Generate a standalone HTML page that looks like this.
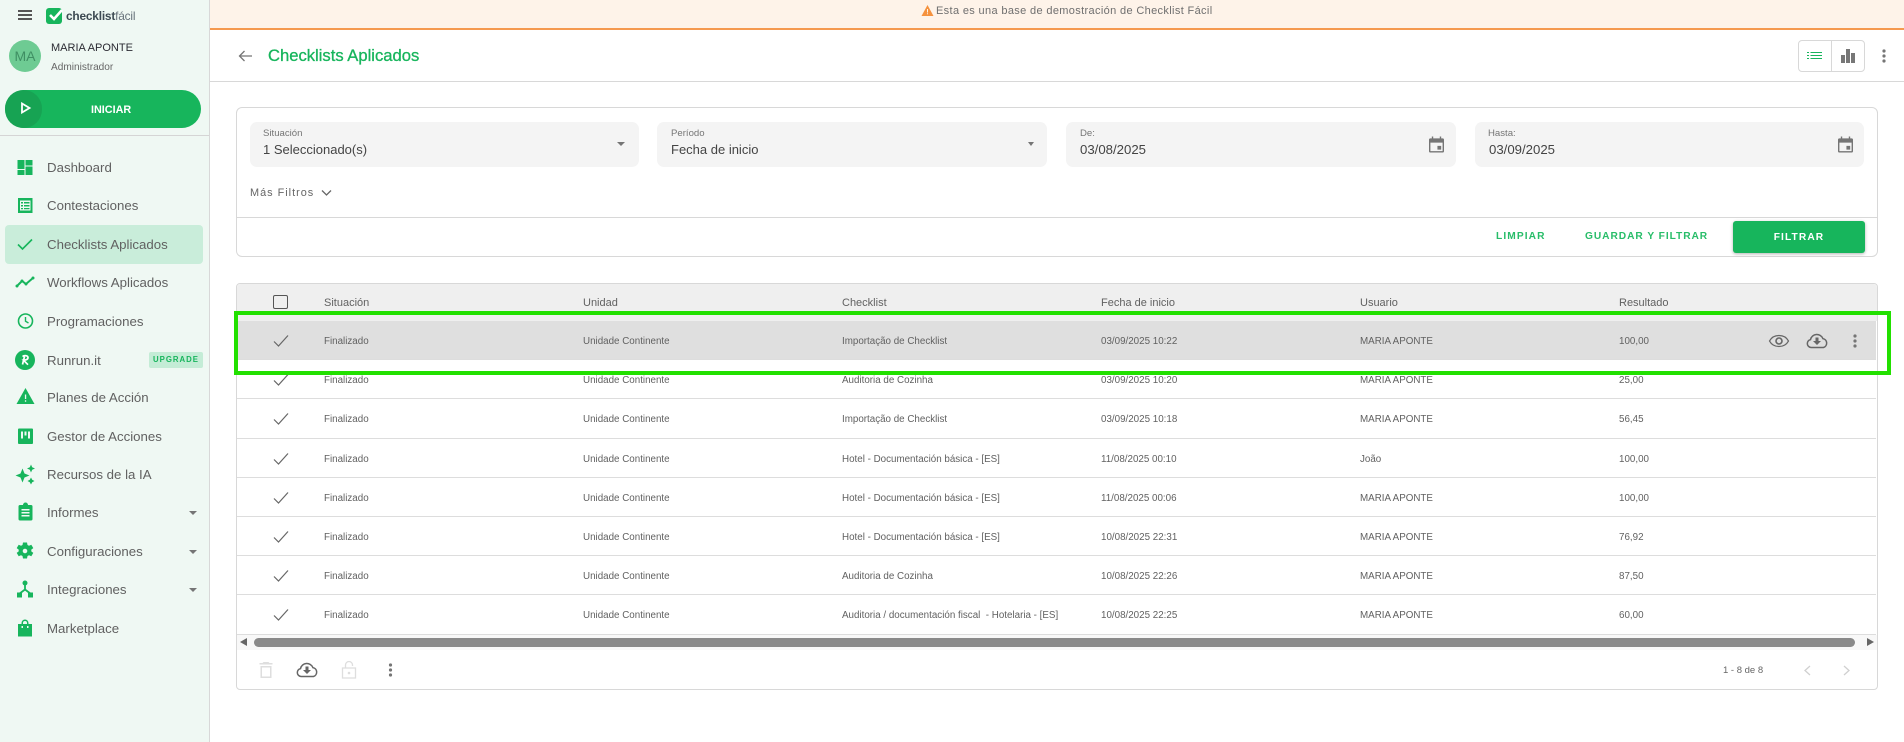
<!DOCTYPE html>
<html lang="es"><head><meta charset="utf-8"><title>Checklists Aplicados</title>
<style>
*{box-sizing:border-box;margin:0;padding:0}
html,body{width:1904px;height:742px;overflow:hidden;background:#fff;font-family:"Liberation Sans",sans-serif;color:#555}
.a{position:absolute}
.t{position:absolute;white-space:nowrap;line-height:16px}
#side{position:absolute;left:0;top:0;width:210px;height:742px;background:#eff8f3;border-right:1px solid #d8d8d8}
.m{position:absolute;left:47px;font-size:13.25px;line-height:18px;color:#616161;white-space:nowrap;margin-top:1px}
.ic{position:absolute;left:13px;width:24px;height:24px;fill:#17b55c}
.car{position:absolute;left:189px;width:0;height:0;border-left:4px solid transparent;border-right:4px solid transparent;border-top:4px solid #757575}
.f{position:absolute;top:122px;height:45px;background:#f4f4f4;border-radius:7px}
.f small{position:absolute;left:13px;top:6px;font-size:9.6px;line-height:12px;color:#757575}
.f b{position:absolute;left:13px;top:19px;font-weight:400;font-size:13px;line-height:18px;color:#444;white-space:nowrap}
.row{position:absolute;left:237px;width:1639px;height:39.2px;border-bottom:1px solid #ddd}
.row span{position:absolute;top:14px;font-size:9.8px;line-height:14px;color:#616161;white-space:nowrap}
.row svg{position:absolute;left:32px;top:8px;width:24px;height:24px;fill:#666}
.c1{left:87px}.c2{left:346px}.c3{left:605px}.c4{left:864px}.c5{left:1123px}.c6{left:1382px}
.h{position:absolute;top:296px;font-size:11px;line-height:14px;color:#616161;white-space:nowrap}
.g{fill:#757575}
</style></head><body>

<div id="side">
  <div class="a" style="left:18px;top:10px;width:14px;height:2px;background:#555"></div>
  <div class="a" style="left:18px;top:14px;width:14px;height:2px;background:#555"></div>
  <div class="a" style="left:18px;top:18px;width:14px;height:2px;background:#555"></div>
  <div class="a" style="left:46px;top:8px;width:16px;height:16px;background:#17b55c;border-radius:3px"></div>
  <svg class="a" style="left:46px;top:6px" width="18" height="18" viewBox="0 0 18 18"><path d="M4 9l4 4 8-9" fill="none" stroke="#fff" stroke-width="2.6"/></svg>
  <div class="t" style="left:66px;top:8px;font-size:11.9px;font-weight:700;color:#3d4a52;letter-spacing:-.2px">checklist<span style="font-weight:400;color:#66717a">fácil</span></div>

  <div class="a" style="left:9px;top:40px;width:32px;height:32px;border-radius:50%;background:#6ecb93;color:#3f8f63;font-size:14px;line-height:32px;text-align:center">MA</div>
  <div class="t" style="left:51px;top:40px;font-size:11px;color:#2b2b33">MARIA APONTE</div>
  <div class="t" style="left:51px;top:60px;font-size:10.1px;color:#666">Administrador</div>

  <div class="a" style="left:5px;top:90px;width:196px;height:38px;border-radius:19px;background:#17b55c"></div>
  <div class="a" style="left:5px;top:90px;width:37px;height:38px;border-radius:19px;background:#17a353"></div>
  <svg class="a" style="left:20px;top:102px" width="12" height="12" viewBox="0 0 12 12"><path d="M2 1.5v9l7.5-4.500z" fill="none" stroke="#fff" stroke-width="1.8"/></svg>
  <div class="t" style="left:91px;top:102px;font-size:10.8px;font-weight:700;color:#fff">INICIAR</div>

  <div class="a" style="left:0;top:135px;width:209px;height:1px;background:#d5d5d5"></div>
  <div class="a" style="left:5px;top:225px;width:198px;height:39px;background:#c9edda;border-radius:4px"></div>

  <svg class="ic" style="top:155px" viewBox="0 0 24 24"><path d="M4.5 5h7v9h-7zM12.500 5h7v5.500h-7zM12.500 11.500h7v8.500h-7zM4.500 15h7v5h-7z"/></svg>
  <div class="m" style="top:158px">Dashboard</div>
  <svg class="ic" style="top:193px" viewBox="0 0 24 24"><path fill-rule="evenodd" d="M5 5h14.500v15H5zM7 7.500v10h10.500v-10z"/><path d="M8 9h2v1.500H8zM11 9h5.500v1.500H11zM8 12h2v1.500H8zM11 12h5.500v1.500H11zM8 15h2v1.300H8zM11 15h5.500v1.300H11z"/></svg>
  <div class="m" style="top:196px">Contestaciones</div>
  <svg class="ic" style="top:232px" viewBox="0 0 24 24"><path d="M5 12.500l4.500 4.500L19 7.500" fill="none" stroke="#17b55c" stroke-width="1.6"/></svg>
  <div class="m" style="top:235px">Checklists Aplicados</div>
  <svg class="ic" style="top:270px" viewBox="0 0 24 24"><path d="M4 16l5-5 4 3 7-6" fill="none" stroke="#17b55c" stroke-width="2"/><circle cx="4" cy="16" r="1.5"/><circle cx="9" cy="11" r="1.5"/><circle cx="13" cy="14" r="1.5"/><circle cx="20" cy="8" r="1.5"/></svg>
  <div class="m" style="top:273px">Workflows Aplicados</div>
  <svg class="ic" style="top:309px" viewBox="0 0 24 24"><circle cx="12.5" cy="12" r="7" fill="none" stroke="#17b55c" stroke-width="1.6"/><path d="M12.500 8v4.200l3 1.800" fill="none" stroke="#17b55c" stroke-width="1.4"/></svg>
  <div class="m" style="top:312px">Programaciones</div>
  <svg class="ic" style="top:348px" viewBox="0 0 24 24"><circle cx="12" cy="12" r="10"/><path d="M9.500 8.500c2-1.500 5.500-1 5.500 1.200 0 2-3 2.500-4.500 2.500l4.500 4.500M11.500 8.500l-2 8" fill="none" stroke="#fff" stroke-width="1.7"/></svg>
  <div class="m" style="top:351px">Runrun.it</div>
  <div class="a" style="left:149px;top:352px;width:54px;height:16px;background:#c4ecd6;border-radius:2px;color:#17b55c;font-size:7.8px;line-height:16px;text-align:center;letter-spacing:1px;font-weight:700">UPGRADE</div>
  <svg class="ic" style="top:385px" viewBox="0 0 24 24"><path fill-rule="evenodd" d="M12.500 3l9 16h-18zM11.900 9.500v4.500h1.300V9.500zM11.900 15.300v1.500h1.300v-1.500z"/></svg>
  <div class="m" style="top:388px">Planes de Acción</div>
  <svg class="ic" style="top:424px" viewBox="0 0 24 24"><path fill-rule="evenodd" d="M6 4.500h13a1 1 0 011 1V19a1 1 0 01-1 1H6a1 1 0 01-1-1V5.500a1 1 0 011-1zM8 7.500v7h2v-7zM11.500 7.500v4h2v-4zM15 7.500v7h2v-7z"/></svg>
  <div class="m" style="top:427px">Gestor de Acciones</div>
  <svg class="ic" style="top:462px" viewBox="0 0 24 24"><path d="M9.500 6.500l2 5 5 2-5 2-2 5-2-5-5-2 5-2zM18 2.500l1.200 2.800 2.800 1.200-2.800 1.200L18 10.500l-1.200-2.800L14 6.500l2.800-1.200zM18 15.500l1.200 2.300 2.300 1.200-2.300 1.200L18 22.500l-1.200-2.300-2.300-1.200 2.300-1.200z"/></svg>
  <div class="m" style="top:465px">Recursos de la IA</div>
  <svg class="ic" style="top:500px" viewBox="0 0 24 24"><path fill-rule="evenodd" d="M7 5h3a2.500 2.500 0 015 0h3a1.500 1.500 0 011.500 1.500V19a1.500 1.500 0 01-1.500 1.500H7A1.500 1.500 0 015.500 19V6.500A1.500 1.500 0 017 5zM8.500 9v1.500h8V9zM8.500 12v1.500h8V12zM8.500 15v1.500h8V15z"/></svg>
  <div class="m" style="top:503px">Informes</div>
  <div class="car" style="top:511px"></div>
  <svg class="ic" style="top:539px" viewBox="0 0 24 24"><path fill-rule="evenodd" d="M10 3.500h4l.5 2.500 1.500.7 2.300-1 2 3.400-2 1.500v1.800l2 1.500-2 3.400-2.300-1-1.500.7-.5 2.500h-4l-.5-2.500-1.500-.7-2.300 1-2-3.400 2-1.500v-1.800l-2-1.500 2-3.400 2.300 1 1.500-.7zM12 9.700a2.300 2.300 0 100 4.600 2.300 2.300 0 000-4.600z"/></svg>
  <div class="m" style="top:542px">Configuraciones</div>
  <div class="car" style="top:550px"></div>
  <svg class="ic" style="top:577px" viewBox="0 0 24 24"><path d="M12 7v5.500l-6 4.500M12 12.500l6 4.500" fill="none" stroke="#17b55c" stroke-width="1.8"/><circle cx="12" cy="6" r="2.5"/><rect x="4" y="15.500" width="5" height="5"/><rect x="15" y="15.500" width="5" height="5"/></svg>
  <div class="m" style="top:580px">Integraciones</div>
  <div class="car" style="top:588px"></div>
  <svg class="ic" style="top:616px" viewBox="0 0 24 24"><path fill-rule="evenodd" d="M5 8h3.500V7a3.500 3.500 0 017 0v1H19v12.500H5zM10 8h4V7a2 2 0 00-4 0zM8.500 10v2H10v-2zM14 10v2h1.500v-2z"/></svg>
  <div class="m" style="top:619px">Marketplace</div>
</div>

<div class="a" style="left:210px;top:0;width:1694px;height:30px;background:#fef3e9;border-bottom:2px solid #f5994f"></div>
<svg class="a" style="left:920.5px;top:4px" width="13" height="13" viewBox="0 0 13 13"><path fill-rule="evenodd" d="M6.500 1l6 11H.5zM6 5v3.500h1V5zM6 9.300v1h1v-1z" fill="#f5923e"/></svg>
<div class="t" style="left:936px;top:3px;font-size:11px;color:#6f6f6f;letter-spacing:.35px">Esta es una base de demostración de Checklist Fácil</div>

<svg class="a" style="left:236px;top:47px" width="18" height="18" viewBox="0 0 18 18"><path d="M16 9H3.500M8.500 4L3.500 9l5 5" fill="none" stroke="#757575" stroke-width="1.3"/></svg>
<div class="t" style="left:268px;top:47px;font-size:16.6px;line-height:18px;font-weight:400;color:#17b55c;-webkit-text-stroke:.3px #17b55c">Checklists Aplicados</div>
<div class="a" style="left:210px;top:81px;width:1694px;height:1px;background:#d8d8d8"></div>

<div class="a" style="left:1798px;top:40px;width:67px;height:32px;border:1px solid #d8d8d8;border-radius:4px"></div>
<div class="a" style="left:1831px;top:40px;width:1px;height:32px;background:#d8d8d8"></div>
<svg class="a" style="left:1807px;top:52px" width="15" height="7" viewBox="0 0 15 7"><path d="M0 .5h2M3.500 .5h11.500M0 3.500h2M3.500 3.500h11.500M0 6.500h2M3.500 6.500h11.500" stroke="#17b55c" stroke-width="1"/></svg>
<svg class="a" style="left:1841px;top:49px" width="14" height="14" viewBox="0 0 14 14"><path d="M0 6h4v8H0zM5 0h4v14H5zM10 4h4v10h-4z" fill="#777"/></svg>
<svg class="a" style="left:1882px;top:49px" width="4" height="14" viewBox="0 0 4 14"><circle cx="2" cy="2" r="1.6" class="g"/><circle cx="2" cy="7" r="1.6" class="g"/><circle cx="2" cy="12" r="1.6" class="g"/></svg>

<div class="a" style="left:236px;top:107px;width:1642px;height:150px;border:1px solid #d8d8d8;border-radius:6px"></div>
<div class="f" style="left:250px;width:389px"><small>Situación</small><b>1 Seleccionado(s)</b></div>
<div class="a" style="left:617px;top:142px;width:0;height:0;border-left:4px solid transparent;border-right:4px solid transparent;border-top:4px solid #757575"></div>
<div class="f" style="left:657px;width:390px"><small style="left:14px">Período</small><b style="left:14px">Fecha de inicio</b></div>
<div class="a" style="left:1028px;top:142px;width:0;height:0;border-left:3.5px solid transparent;border-right:3.5px solid transparent;border-top:4px solid #757575"></div>
<div class="f" style="left:1066px;width:390px"><small style="left:14px">De:</small><b style="left:14px;font-size:13.2px">03/08/2025</b></div>
<div class="f" style="left:1475px;width:389px"><small>Hasta:</small><b style="left:14px;font-size:13.2px">03/09/2025</b></div>
<svg class="a" style="left:1429px;top:136px" width="15" height="17" viewBox="0 0 16 17"><path fill-rule="evenodd" d="M3 0h1.500v2h7V0H13v2h1.500A1.500 1.500 0 0116 3.500v12a1.500 1.500 0 01-1.500 1.500h-13A1.500 1.500 0 010 15.500v-12A1.500 1.500 0 011.500 2H3zM1.500 6.500v9h13v-9zM9 10h4v4H9z" fill="#757575"/></svg>
<svg class="a" style="left:1838px;top:136px" width="15" height="17" viewBox="0 0 16 17"><path fill-rule="evenodd" d="M3 0h1.500v2h7V0H13v2h1.500A1.500 1.500 0 0116 3.500v12a1.500 1.500 0 01-1.500 1.500h-13A1.500 1.500 0 010 15.500v-12A1.500 1.500 0 011.500 2H3zM1.500 6.500v9h13v-9zM9 10h4v4H9z" fill="#757575"/></svg>
<div class="t" style="left:250px;top:185px;font-size:10.9px;color:#666;letter-spacing:1px">Más Filtros</div>
<svg class="a" style="left:321px;top:189px" width="11" height="8" viewBox="0 0 11 8"><path d="M1 1.500l4.500 4.500L10 1.500" fill="none" stroke="#666" stroke-width="1.3"/></svg>
<div class="a" style="left:237px;top:217px;width:1640px;height:1px;background:#d8d8d8"></div>
<div class="t" style="left:1496px;top:229px;font-size:10.2px;font-weight:700;color:#28bd69;letter-spacing:1.1px">LIMPIAR</div>
<div class="t" style="left:1585px;top:229px;font-size:10.2px;font-weight:700;color:#28bd69;letter-spacing:.95px">GUARDAR Y FILTRAR</div>
<div class="a" style="left:1733px;top:221px;width:132px;height:32px;background:#17b55c;border-radius:3px;box-shadow:0 1px 3px rgba(0,0,0,.3);color:#fff;font-size:10.2px;font-weight:700;line-height:34px;text-align:center;letter-spacing:1.1px">FILTRAR</div>

<div class="a" style="left:236px;top:283px;width:1642px;height:407px;border:1px solid #d8d8d8;border-radius:4px"></div>
<div class="a" style="left:237px;top:284px;width:1640px;height:37px;background:#efefef;border-radius:4px 4px 0 0"></div>
<div class="a" style="left:273px;top:295px;width:15px;height:14px;border:1px solid #555;border-radius:2px"></div>
<div class="h" style="left:324px">Situación</div>
<div class="h" style="left:583px">Unidad</div>
<div class="h" style="left:842px">Checklist</div>
<div class="h" style="left:1101px">Fecha de inicio</div>
<div class="h" style="left:1360px">Usuario</div>
<div class="h" style="left:1619px">Resultado</div>

<div class="row" style="top:321px;background:#dfdfdf"><svg viewBox="0 0 24 24"><path d="M5 12.500l4.500 4.500L19 6.500" fill="none" stroke="#666" stroke-width="1.2"/></svg><span class="c1">Finalizado</span><span class="c2">Unidade Continente</span><span class="c3">Importação de Checklist</span><span class="c4">03/09/2025 10:22</span><span class="c5">MARIA APONTE</span><span class="c6">100,00</span></div>
<div class="row" style="top:360.2px"><svg viewBox="0 0 24 24"><path d="M5 12.500l4.500 4.500L19 6.500" fill="none" stroke="#666" stroke-width="1.2"/></svg><span class="c1">Finalizado</span><span class="c2">Unidade Continente</span><span class="c3">Auditoria de Cozinha</span><span class="c4">03/09/2025 10:20</span><span class="c5">MARIA APONTE</span><span class="c6">25,00</span></div>
<div class="row" style="top:399.4px"><svg viewBox="0 0 24 24"><path d="M5 12.500l4.500 4.500L19 6.500" fill="none" stroke="#666" stroke-width="1.2"/></svg><span class="c1">Finalizado</span><span class="c2">Unidade Continente</span><span class="c3">Importação de Checklist</span><span class="c4">03/09/2025 10:18</span><span class="c5">MARIA APONTE</span><span class="c6">56,45</span></div>
<div class="row" style="top:438.6px"><svg viewBox="0 0 24 24"><path d="M5 12.500l4.500 4.500L19 6.500" fill="none" stroke="#666" stroke-width="1.2"/></svg><span class="c1">Finalizado</span><span class="c2">Unidade Continente</span><span class="c3">Hotel - Documentación básica - [ES]</span><span class="c4">11/08/2025 00:10</span><span class="c5">João</span><span class="c6">100,00</span></div>
<div class="row" style="top:477.8px"><svg viewBox="0 0 24 24"><path d="M5 12.500l4.500 4.500L19 6.500" fill="none" stroke="#666" stroke-width="1.2"/></svg><span class="c1">Finalizado</span><span class="c2">Unidade Continente</span><span class="c3">Hotel - Documentación básica - [ES]</span><span class="c4">11/08/2025 00:06</span><span class="c5">MARIA APONTE</span><span class="c6">100,00</span></div>
<div class="row" style="top:517px"><svg viewBox="0 0 24 24"><path d="M5 12.500l4.500 4.500L19 6.500" fill="none" stroke="#666" stroke-width="1.2"/></svg><span class="c1">Finalizado</span><span class="c2">Unidade Continente</span><span class="c3">Hotel - Documentación básica - [ES]</span><span class="c4">10/08/2025 22:31</span><span class="c5">MARIA APONTE</span><span class="c6">76,92</span></div>
<div class="row" style="top:556.2px"><svg viewBox="0 0 24 24"><path d="M5 12.500l4.500 4.500L19 6.500" fill="none" stroke="#666" stroke-width="1.2"/></svg><span class="c1">Finalizado</span><span class="c2">Unidade Continente</span><span class="c3">Auditoria de Cozinha</span><span class="c4">10/08/2025 22:26</span><span class="c5">MARIA APONTE</span><span class="c6">87,50</span></div>
<div class="row" style="top:595.4px"><svg viewBox="0 0 24 24"><path d="M5 12.500l4.500 4.500L19 6.500" fill="none" stroke="#666" stroke-width="1.2"/></svg><span class="c1">Finalizado</span><span class="c2">Unidade Continente</span><span class="c3">Auditoria / documentación fiscal &nbsp;- Hotelaria - [ES]</span><span class="c4">10/08/2025 22:25</span><span class="c5">MARIA APONTE</span><span class="c6">60,00</span></div>

<svg class="a" style="left:1767px;top:329px" width="24" height="24" viewBox="0 0 24 24"><path d="M2.500 12c2-3.700 5.500-5.500 9.500-5.500s7.500 1.800 9.500 5.500c-2 3.700-5.500 5.500-9.500 5.500s-7.500-1.800-9.500-5.500z" fill="none" stroke="#666" stroke-width="1.3"/><circle cx="12" cy="12" r="3" fill="none" stroke="#666" stroke-width="1.6"/></svg>
<svg class="a" style="left:1805px;top:329px" width="24" height="24" viewBox="0 0 24 24"><path d="M6 18.500a4 4 0 01-.5-7.900 6.500 6.500 0 0112.400-1A4.600 4.600 0 0118.500 18.500z" fill="none" stroke="#666" stroke-width="1.5"/><path d="M10.500 8.500h3v3.500H16l-4 4-4-4h2.500z" fill="#666"/></svg>
<svg class="a" style="left:1853px;top:334px" width="4" height="14" viewBox="0 0 4 14"><circle cx="2" cy="2" r="1.6" class="g"/><circle cx="2" cy="7" r="1.6" class="g"/><circle cx="2" cy="12" r="1.6" class="g"/></svg>

<div class="a" style="left:234px;top:310.5px;width:1657px;height:64px;border:4px solid #22e000"></div>

<div class="a" style="left:237px;top:635px;width:1640px;height:15px;background:#f8f8f8"></div>
<div class="a" style="left:254px;top:638px;width:1601px;height:9px;background:#8a8a8a;border-radius:5px"></div>
<div class="a" style="left:240px;top:638px;width:0;height:0;border-top:4.5px solid transparent;border-bottom:4.5px solid transparent;border-right:7px solid #666"></div>
<div class="a" style="left:1867px;top:638px;width:0;height:0;border-top:4.5px solid transparent;border-bottom:4.5px solid transparent;border-left:7px solid #666"></div>

<svg class="a" style="left:256px;top:660px" width="20" height="20" viewBox="0 0 20 20"><path fill-rule="evenodd" d="M7.500 2h5l1 1h3v1.500h-13V3h3zM4.500 6h11v12h-11zM6 7.500v9h8v-9z" fill="#dedede"/></svg>
<svg class="a" style="left:295px;top:658px" width="24" height="24" viewBox="0 0 24 24"><path d="M6 18.500a4 4 0 01-.5-7.900 6.500 6.500 0 0112.400-1A4.600 4.600 0 0118.500 18.500z" fill="none" stroke="#666" stroke-width="1.5"/><path d="M10.500 8.500h3v3.500H16l-4 4-4-4h2.500z" fill="#666"/></svg>
<svg class="a" style="left:340px;top:660px" width="18" height="20" viewBox="0 0 18 20"><path d="M2.500 8h13v10h-13zM5.500 8V5a3.500 3.500 0 017 0v1" fill="none" stroke="#dedede" stroke-width="1.3"/><circle cx="9" cy="13" r="1.3" fill="#dedede"/></svg>
<svg class="a" style="left:388px;top:663px" width="5" height="14" viewBox="0 0 4 14"><circle cx="2" cy="2" r="1.6" class="g"/><circle cx="2" cy="7" r="1.6" class="g"/><circle cx="2" cy="12" r="1.6" class="g"/></svg>
<div class="t" style="left:1723px;top:663px;font-size:9.5px;color:#666">1 - 8 de 8</div>
<svg class="a" style="left:1803px;top:665px" width="9" height="11" viewBox="0 0 9 11"><path d="M7 1L2 5.500 7 10" fill="none" stroke="#d0d0d0" stroke-width="1.3"/></svg>
<svg class="a" style="left:1842px;top:665px" width="9" height="11" viewBox="0 0 9 11"><path d="M2 1l5 4.500L2 10" fill="none" stroke="#d0d0d0" stroke-width="1.3"/></svg>

</body></html>
